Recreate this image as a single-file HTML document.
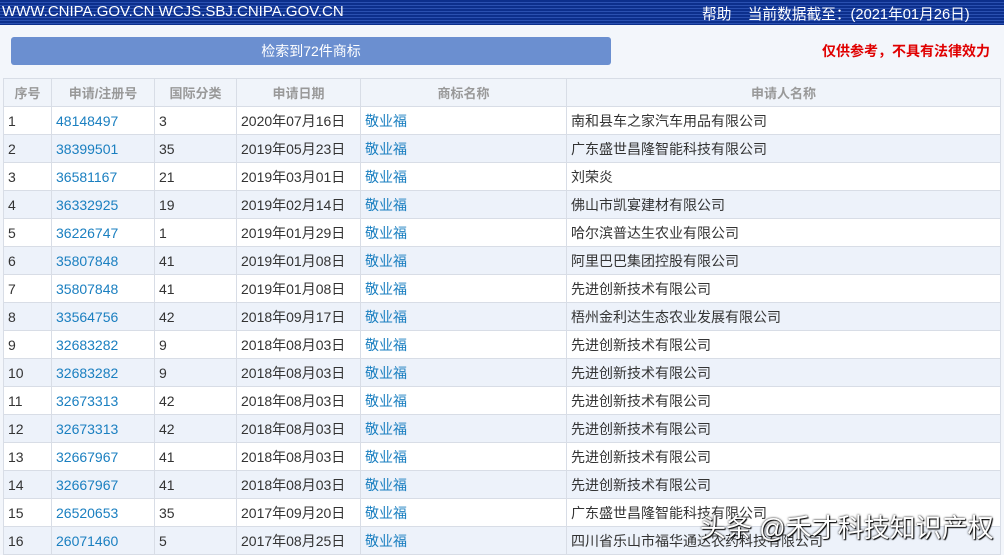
<!DOCTYPE html>
<html><head><meta charset="utf-8"><style>
body{margin:0;width:1004px;height:555px;overflow:hidden;background:#f3f6fb;font-family:"Liberation Sans","Noto Sans CJK SC",sans-serif;font-size:14px;color:#333;position:relative}
.top{position:absolute;left:0;top:0;width:1004px;height:25px;background:repeating-linear-gradient(180deg,#0c2f8c 0,#0c2f8c 2px,#2a50b0 2px,#2a50b0 3px);color:#fff}
.top .l{position:absolute;left:2px;top:3px;font-size:15px}
.top .r{position:absolute;left:702px;top:3px;font-size:14.7px;white-space:nowrap}
.btn{position:absolute;left:11px;top:37px;width:600px;height:28px;background:#6b8fd0;border-radius:3px;color:#fff;text-align:center;line-height:28px;font-size:14px}
.warn{position:absolute;left:822px;top:41px;color:#e00000;font-weight:bold;font-size:14px}
table{position:absolute;left:3px;top:78px;border-collapse:collapse;width:998px}
td,th{border:1px solid #d8dde6;height:27px;padding:0 0 0 4px;text-align:left;white-space:nowrap}
th{font-weight:bold;color:#999;text-align:center;background:#f0f4fa;padding:0;font-size:13px}
tr:nth-child(odd) td{background:#edf2fa}
tr:nth-child(even) td{background:#fff}
a{color:#1a7fc0;text-decoration:none}
.wm{position:absolute;left:700px;top:508px;font-size:26px;color:#fff;white-space:nowrap;text-shadow:0 0 2px #000,1px 1px 1px #000}
</style></head><body>
<div class="top"><span class="l">WWW.CNIPA.GOV.CN WCJS.SBJ.CNIPA.GOV.CN</span><span class="r">帮助&nbsp;&nbsp;&nbsp;&nbsp;当前数据截至：(2021年01月26日)</span></div>
<div class="btn">检索到72件商标</div>
<div class="warn">仅供参考，不具有法律效力</div>
<table>
<colgroup><col style="width:48px"><col style="width:103px"><col style="width:82px"><col style="width:124px"><col style="width:206px"><col></colgroup>
<tr><th>序号</th><th>申请/注册号</th><th>国际分类</th><th>申请日期</th><th>商标名称</th><th>申请人名称</th></tr>
<tr><td>1</td><td><a>48148497</a></td><td>3</td><td>2020年07月16日</td><td><a>敬业福</a></td><td>南和县车之家汽车用品有限公司</td></tr>
<tr><td>2</td><td><a>38399501</a></td><td>35</td><td>2019年05月23日</td><td><a>敬业福</a></td><td>广东盛世昌隆智能科技有限公司</td></tr>
<tr><td>3</td><td><a>36581167</a></td><td>21</td><td>2019年03月01日</td><td><a>敬业福</a></td><td>刘荣炎</td></tr>
<tr><td>4</td><td><a>36332925</a></td><td>19</td><td>2019年02月14日</td><td><a>敬业福</a></td><td>佛山市凯宴建材有限公司</td></tr>
<tr><td>5</td><td><a>36226747</a></td><td>1</td><td>2019年01月29日</td><td><a>敬业福</a></td><td>哈尔滨普达生农业有限公司</td></tr>
<tr><td>6</td><td><a>35807848</a></td><td>41</td><td>2019年01月08日</td><td><a>敬业福</a></td><td>阿里巴巴集团控股有限公司</td></tr>
<tr><td>7</td><td><a>35807848</a></td><td>41</td><td>2019年01月08日</td><td><a>敬业福</a></td><td>先进创新技术有限公司</td></tr>
<tr><td>8</td><td><a>33564756</a></td><td>42</td><td>2018年09月17日</td><td><a>敬业福</a></td><td>梧州金利达生态农业发展有限公司</td></tr>
<tr><td>9</td><td><a>32683282</a></td><td>9</td><td>2018年08月03日</td><td><a>敬业福</a></td><td>先进创新技术有限公司</td></tr>
<tr><td>10</td><td><a>32683282</a></td><td>9</td><td>2018年08月03日</td><td><a>敬业福</a></td><td>先进创新技术有限公司</td></tr>
<tr><td>11</td><td><a>32673313</a></td><td>42</td><td>2018年08月03日</td><td><a>敬业福</a></td><td>先进创新技术有限公司</td></tr>
<tr><td>12</td><td><a>32673313</a></td><td>42</td><td>2018年08月03日</td><td><a>敬业福</a></td><td>先进创新技术有限公司</td></tr>
<tr><td>13</td><td><a>32667967</a></td><td>41</td><td>2018年08月03日</td><td><a>敬业福</a></td><td>先进创新技术有限公司</td></tr>
<tr><td>14</td><td><a>32667967</a></td><td>41</td><td>2018年08月03日</td><td><a>敬业福</a></td><td>先进创新技术有限公司</td></tr>
<tr><td>15</td><td><a>26520653</a></td><td>35</td><td>2017年09月20日</td><td><a>敬业福</a></td><td>广东盛世昌隆智能科技有限公司</td></tr>
<tr><td>16</td><td><a>26071460</a></td><td>5</td><td>2017年08月25日</td><td><a>敬业福</a></td><td>四川省乐山市福华通达农药科技有限公司</td></tr>
</table>
<div class="wm">头条 @禾才科技知识产权</div>
</body></html>
